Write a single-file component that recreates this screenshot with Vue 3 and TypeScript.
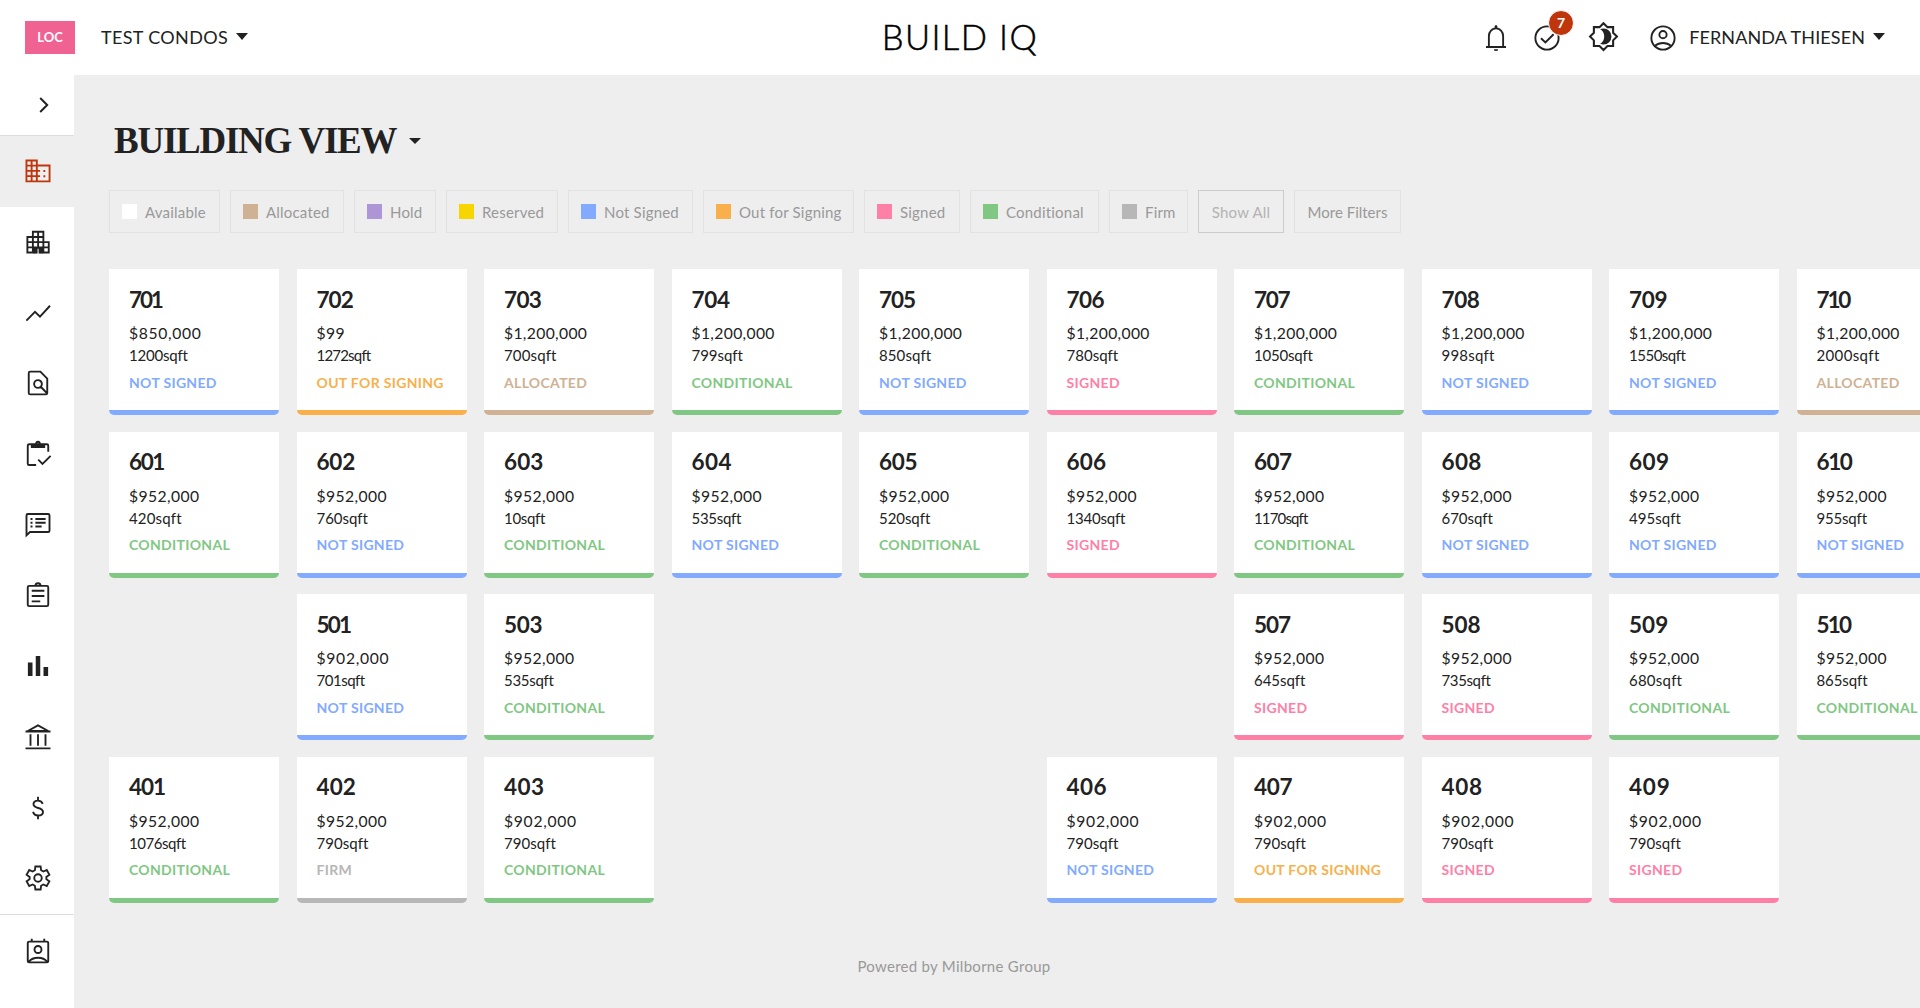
<script setup lang="ts">
type Status = 'not' | 'out' | 'allocated' | 'conditional' | 'signed' | 'firm'

interface Unit {
  number: string
  price: string
  area: string
  status: Status
}

const statusLabels: Record<Status, string> = {
  not: 'NOT SIGNED',
  out: 'OUT FOR SIGNING',
  allocated: 'ALLOCATED',
  conditional: 'CONDITIONAL',
  signed: 'SIGNED',
  firm: 'FIRM',
}

// number, price, area in sqft, status; null leaves the slot empty
type Row = ([number, string, number, Status] | null)[]

const rows: Row[] = [
  [
    [701, '$850,000', 1200, 'not'],
    [702, '$99', 1272, 'out'],
    [703, '$1,200,000', 700, 'allocated'],
    [704, '$1,200,000', 799, 'conditional'],
    [705, '$1,200,000', 850, 'not'],
    [706, '$1,200,000', 780, 'signed'],
    [707, '$1,200,000', 1050, 'conditional'],
    [708, '$1,200,000', 998, 'not'],
    [709, '$1,200,000', 1550, 'not'],
    [710, '$1,200,000', 2000, 'allocated'],
  ],
  [
    [601, '$952,000', 420, 'conditional'],
    [602, '$952,000', 760, 'not'],
    [603, '$952,000', 10, 'conditional'],
    [604, '$952,000', 535, 'not'],
    [605, '$952,000', 520, 'conditional'],
    [606, '$952,000', 1340, 'signed'],
    [607, '$952,000', 1170, 'conditional'],
    [608, '$952,000', 670, 'not'],
    [609, '$952,000', 495, 'not'],
    [610, '$952,000', 955, 'not'],
  ],
  [
    null,
    [501, '$902,000', 701, 'not'],
    [503, '$952,000', 535, 'conditional'],
    null,
    null,
    null,
    [507, '$952,000', 645, 'signed'],
    [508, '$952,000', 735, 'signed'],
    [509, '$952,000', 680, 'conditional'],
    [510, '$952,000', 865, 'conditional'],
  ],
  [
    [401, '$952,000', 1076, 'conditional'],
    [402, '$952,000', 790, 'firm'],
    [403, '$902,000', 790, 'conditional'],
    null,
    null,
    [406, '$902,000', 790, 'not'],
    [407, '$902,000', 790, 'out'],
    [408, '$902,000', 790, 'signed'],
    [409, '$902,000', 790, 'signed'],
    null,
  ],
]

const slots: (Unit | null)[] = rows.flat().map((u) =>
  u ? { number: String(u[0]), price: u[1], area: `${u[2]}sqft`, status: u[3] } : null,
)

// Proportional advances (em) for figures; the font's own figures are all 0.58em wide.
const advances: Record<string, number> = {
  '0': 0.645, '1': 0.35, '2': 0.51, '3': 0.55, '4': 0.6, '5': 0.5,
  '6': 0.56, '7': 0.46, '8': 0.585, '9': 0.6, $: 0.55,
}

function tracking(text: string, extra = 0): { letterSpacing: string } {
  let diff = 0
  for (const c of text) diff += c in advances ? advances[c] - 0.58 : 0
  return { letterSpacing: `${(diff / text.length + extra).toFixed(4)}em` }
}

const filters = [
  { label: 'Available', key: 'available', width: 111 },
  { label: 'Allocated', key: 'allocated', width: 114 },
  { label: 'Hold', key: 'hold', width: 82 },
  { label: 'Reserved', key: 'reserved', width: 112 },
  { label: 'Not Signed', key: 'not', width: 125 },
  { label: 'Out for Signing', key: 'out', width: 151 },
  { label: 'Signed', key: 'signed', width: 96 },
  { label: 'Conditional', key: 'conditional', width: 129 },
  { label: 'Firm', key: 'firm', width: 79 },
]

interface NavIcon {
  name: string
  d: string
  fill?: string
}

const nav: NavIcon[] = [
  {
    name: 'domain',
    d: 'M2.75 3.6h8.3v4h10.2v12.7H2.75zM6.9 3.6v16.7M11.05 7.6v12.7M2.75 7.7h8.3M2.75 11.9h10.9M2.75 16.1h10.9',
    fill: 'M16.3 11.1h1.5v1.6h-1.5zM16.3 15.3h1.5v1.6h-1.5z',
  },
  {
    name: 'apartment',
    d: 'M10.9 20.4H3.5V8h4.4V3.8h8.4v8.3h4.3v8.3h-7.4v-3.7h-2.3zM7.9 8v12.4M12.1 3.8v12.5M16.3 12v8.4M7.9 8h8.4M3.5 12.1h12.8M3.5 16.3h17.1',
    fill: 'M8 16.8h2.9V21H8zM13.2 16.8h3.1V21h-3.1z',
  },
  { name: 'trend', d: 'M2.7 18.1 9.6 11l4 4 8-8.8' },
  {
    name: 'document-search',
    d: 'M5.6 2.9h8.3l5.5 5.6v11.4q0 1.2-1.2 1.2H5.8q-1.2 0-1.2-1.2V4.1q0-1.2 1-1.2zM15.1 12.8a3.1 3.1 0 1 1-6.2 0 3.1 3.1 0 0 1 6.2 0zM14.2 15l5.2 5.4',
  },
  {
    name: 'clipboard-check',
    d: 'M10.5 20.8H4.9q-1.1 0-1.1-1.1V5.3q0-1.1 1.1-1.1h14.2q1.1 0 1.1 1.1v4.9M12.2 16.5l3.4 3.4 6.5-6.4M10.6 3.6a1.4 1.4 0 1 1 2.8 0',
    fill: 'M6.3 4h3.9l1 .8h1.6l1-.8h3.9v3.2H6.3z',
  },
  {
    name: 'comment-list',
    d: 'M2.8 20.2V4.3q0-1.1 1.1-1.1h16.2q1.1 0 1.1 1.1v12.2q0 1.1-1.1 1.1H5.6zM9.9 7.2h8.2M9.9 10.2h8.2M9.9 13.2h5',
    fill: 'M6 6.4h1.6V8H6zM6 9.4h1.6V11H6zM6 12.4h1.6V14H6z',
  },
  {
    name: 'clipboard-list',
    d: 'M9.9 4.7H4.9q-1.1 0-1.1 1.1v14q0 1.1 1.1 1.1h14.2q1.1 0 1.1-1.1v-14q0-1.1-1.1-1.1h-5M9.9 4.7c.2-2.8 4-2.8 4.2 0zM7 8.6h10.1M7 12.8h10.1M7 17.1h6.8',
  },
  { name: 'bars', d: '', fill: 'M3.9 9.1h3.7V20H3.9zM10.2 4h3.6v16h-3.6zM16.4 12.8h3.7V20h-3.7z' },
  { name: 'bank', d: 'M3.8 7.2 12 2.7l8.2 4.5zM2 7.6h20M6 9.8v9.1M12 9.8v9.1M18 9.8v9.1M2 21.1h20' },
  {
    name: 'dollar',
    d: 'M12 3v3M12 18.2V21M15.8 8.7c-.6-1.7-1.9-2.6-3.8-2.6-2.2 0-3.6 1.2-3.6 2.9 0 1.8 1.4 2.4 3.7 3 2.4.6 3.9 1.4 3.9 3.2S14.4 18 12.1 18c-2.1 0-3.5-1-4.1-2.9',
  },
  {
    name: 'settings',
    d: 'M9.9 21.2 9.5 18.2 7.7 17.2 5 18.4 2.9 14.7 5.3 12.9V11.1L2.9 9.3 5 5.6 7.7 6.8 9.5 5.8 9.9 2.8h4.2l.4 3 1.8 1L19 5.6l2.1 3.7-2.4 1.8v1.8l2.4 1.8L19 18.4l-2.7-1.2-1.8 1-.4 3zM15 12a3 3 0 1 1-6 0 3 3 0 0 1 6 0z',
  },
]
</script>

<template>
  <div class="app">
    <header class="topbar">
      <div class="topbar-left">
        <span class="loc">LOC</span>
        <span class="project">TEST CONDOS</span>
        <i class="caret"></i>
      </div>
      <div class="logo">BUILD IQ</div>
      <div class="topbar-right">
        <svg class="icon bell" viewBox="0 0 24 24">
          <path d="M4 19.2h16M6.3 19V10.3a5.7 6 0 0 1 11.4 0V19M12 4.3V2.2" />
          <path class="solid" d="M10.3 20.9h3.4a1.7 1.5 0 0 1-3.4 0zM10.9 2.8a1.1 1.1 0 0 1 2.2 0v1.6h-2.2z" />
        </svg>
        <span class="tasks">
          <svg class="icon" viewBox="0 0 24 24">
            <circle cx="12" cy="12" r="9.3" />
            <path d="M7.2 12.2l3.5 3.4 6.6-6.6" />
          </svg>
          <b class="badge">7</b>
        </span>
        <svg class="icon theme" viewBox="0 0 24 24">
          <path d="M12 2.3l2.9 2.9H19v4.1l2.8 2.7-2.8 2.8v4.1h-4.1L12 21.8l-2.9-2.9H5v-4.1L2.2 12 5 9.3V5.2h4.1z" />
          <path class="solid" d="M9.6 6.7q.9-.5 2.4-.5a5.8 5.8 0 0 1 0 11.6q-1.5 0-2.4-.5c3.9-2.1 3.9-8.5 0-10.6z" />
        </svg>
        <svg class="icon account" viewBox="0 0 24 24">
          <circle cx="12" cy="12" r="9.3" />
          <circle cx="12" cy="9.3" r="2.9" />
          <path d="M5.5 18.3c3.7-3.1 9.3-3.1 13 0" />
        </svg>
        <span class="user">FERNANDA THIESEN</span>
        <i class="caret"></i>
      </div>
    </header>

    <div class="body">
      <nav class="sidebar">
        <div class="toggle">
          <svg class="chevron" viewBox="0 0 10 16"><path d="M1.2 1 8.2 8l-7 7" /></svg>
        </div>
        <div v-for="(item, i) in nav" :key="item.name" class="nav-item" :class="{ active: i === 0 }">
          <svg class="icon" viewBox="0 0 24 24">
            <path :d="item.d" />
            <path v-if="item.fill" class="solid" :d="item.fill" />
          </svg>
        </div>
        <div class="nav-item contact">
          <svg class="icon" viewBox="0 0 24 24">
            <path d="M4.9 4.5h14.2q1.1 0 1.1 1.1V20q0 1.1-1.1 1.1H4.9q-1.1 0-1.1-1.1V5.6q0-1.1 1.1-1.1zM7 2.2v2.3M17 2.2v2.3M4.6 20.6c3.4-4.3 11.4-4.3 14.8 0" />
            <circle cx="12" cy="10.8" r="2.8" />
          </svg>
        </div>
      </nav>

      <main class="main">
        <h1 class="title"><span>BUILDING VIEW</span><i class="caret"></i></h1>

        <div class="filters">
          <div v-for="f in filters" :key="f.key" class="chip" :style="{ width: f.width + 'px' }">
            <i class="swatch" :class="f.key"></i><span>{{ f.label }}</span>
          </div>
          <div class="chip plain show-all">Show All</div>
          <div class="chip plain more">More Filters</div>
        </div>

        <div class="grid">
          <template v-for="(u, i) in slots" :key="i">
            <article v-if="u" class="card" :class="u.status">
              <div class="number" :style="tracking(u.number)">{{ u.number }}</div>
              <div class="price" :style="tracking(u.price, 0.022)">{{ u.price }}</div>
              <div class="area" :style="tracking(u.area, 0.008)">{{ u.area }}</div>
              <div class="status">{{ statusLabels[u.status] }}</div>
            </article>
            <div v-else></div>
          </template>
        </div>

        <footer class="footer">Powered by Milborne Group</footer>
      </main>
    </div>
  </div>
</template>

<style>
body {
  margin: 0;
  background: #eee;
}
</style>

<style scoped>
.app {
  width: 100%;
  height: 1008px;
  display: flex;
  flex-direction: column;
  overflow: hidden;
  background: #eee;
  color: #222;
  font-family: Lato, "Open Sans", sans-serif;
  white-space: nowrap;
}

.topbar {
  flex: none;
  height: 75px;
  display: grid;
  grid-template-columns: 1fr auto 1fr;
  align-items: center;
  background: #fff;
}

.topbar-left,
.topbar-right {
  display: flex;
  align-items: center;
}

.topbar-left {
  padding-left: 25px;
}

.topbar-right {
  justify-content: flex-end;
  padding-right: 35px;
}

.loc {
  width: 50px;
  height: 33px;
  line-height: 33px;
  margin-right: 26px;
  background: #f06292;
  color: #fff;
  font-size: 13px;
  font-weight: 700;
  text-align: center;
}

.project,
.user {
  font-size: 18px;
  line-height: 24px;
  margin-bottom: 2px;
}

.project {
  letter-spacing: 0.35px;
}

.user {
  letter-spacing: 0.1px;
}

.caret {
  flex: none;
  border: 6.5px solid transparent;
  border-top: 7px solid #222;
  border-bottom: 0;
  margin-left: 8px;
}

.topbar .caret {
  margin-top: -2px;
}

.logo {
  margin-bottom: 2px;
  font-size: 34.5px;
  font-weight: 300;
  line-height: 44px;
  color: #000;
  letter-spacing: 1.4px;
  -webkit-text-stroke: 0.5px #000;
}

.icon {
  flex: none;
  display: block;
  width: 30px;
  height: 30px;
  fill: none;
  stroke: currentColor;
  stroke-width: 1.5;
}

.solid {
  fill: currentColor;
  stroke: none;
}

.bell {
  margin-right: 21px;
}

.tasks {
  position: relative;
  margin-right: 25px;
}

.badge {
  position: absolute;
  left: 16px;
  top: -13px;
  width: 24px;
  height: 24px;
  line-height: 24px;
  border: 1px solid #fff;
  border-radius: 50%;
  background: #bf360c;
  color: #fff;
  font-size: 14px;
  text-align: center;
}

.theme {
  width: 33px;
  height: 33px;
  margin: -2px 28px 0 0;
}

.account {
  margin-right: 11px;
}

.body {
  flex: 1;
  min-height: 0;
  display: flex;
}

.sidebar {
  flex: none;
  width: 74px;
  background: #fff;
}

.toggle {
  height: 60px;
  border-bottom: 1px solid #ddd;
  display: flex;
  align-items: center;
  padding-left: 39px;
}

.chevron {
  width: 10px;
  height: 16px;
  fill: none;
  stroke: #222;
  stroke-width: 2;
}

.nav-item {
  height: 70.7px;
  display: flex;
  align-items: center;
  justify-content: center;
  padding-left: 1px;
}

.nav-item.active {
  background: #eee;
  color: #bf360c;
}

.nav-item.contact {
  height: 72px;
  border-top: 1px solid #ddd;
}

.main {
  flex: 1;
  min-width: 0;
  padding: 44px 0 0 35px;
  overflow: hidden;
}

.title {
  display: flex;
  align-items: center;
  height: 44px;
  margin: 0 0 27px 5px;
  font-family: "Liberation Serif", serif;
  font-size: 37px;
  font-weight: 700;
  line-height: 44px;
  letter-spacing: -1.25px;
}

.title .caret {
  margin-left: 13px;
  border-width: 6px 6px 0;
}

.filters {
  display: flex;
  gap: 10px;
  margin-bottom: 36px;
}

.chip {
  flex: none;
  box-sizing: border-box;
  height: 43px;
  display: flex;
  align-items: center;
  padding: 0 0 0 12px;
  border: 1px solid #e2e2e2;
  color: #999;
  font-size: 15px;
  letter-spacing: 0.2px;
}

.swatch {
  width: 15px;
  height: 15px;
  margin: -1px 8px 0 0;
}

.chip.plain {
  padding-left: 0;
  justify-content: center;
}

.show-all {
  width: 86px;
  border-color: #ccc;
  color: #b3b3b3;
}

.chip.more {
  width: 107px;
  letter-spacing: 0;
}

.swatch {
  background: var(--tone);
}

.swatch.available { background: #fff; }
.swatch.hold { background: #ae96d6; }
.swatch.reserved { background: #f7d600; }

.not { --tone: #82aaff; }
.out { --tone: #f9b04b; }
.allocated { --tone: #cfb193; }
.conditional { --tone: #81c784; }
.signed { --tone: #ff80a6; }
.firm { --tone: #b7b7b7; }

.grid {
  display: grid;
  grid-template-columns: repeat(10, 170px);
  grid-auto-rows: 146px;
  gap: 16.6px 17.5px;
}

.card {
  box-sizing: border-box;
  padding: 17.5px 0 0 20px;
  border-bottom: 5px solid var(--tone);
  border-radius: 0 0 5px 5px;
  background: #fff;
}

.number {
  font-size: 22.5px;
  font-weight: 700;
  line-height: 26px;
  margin-bottom: 9.5px;
}

.price {
  font-size: 15.7px;
  line-height: 22px;
}

.area {
  font-size: 15px;
  line-height: 22px;
}

.status {
  margin-top: 6.5px;
  font-size: 14px;
  font-weight: 700;
  line-height: 20px;
  letter-spacing: 0.32px;
  color: var(--tone);
}

.footer {
  margin: 53px 0 0 -35px;
  padding-right: 86px;
  text-align: center;
  color: #999;
  font-size: 15px;
  line-height: 20px;
  letter-spacing: 0.28px;
}
</style>
